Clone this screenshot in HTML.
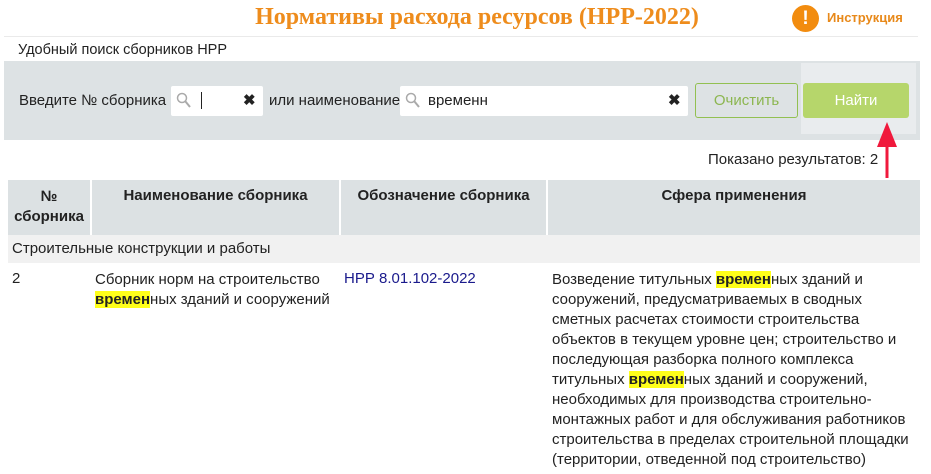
<!DOCTYPE html>
<html><head><meta charset="utf-8"><style>
*{margin:0;padding:0;box-sizing:border-box}
body{width:931px;height:474px;overflow:hidden;background:#fff;font-family:"Liberation Sans",Arial,sans-serif;font-size:15px;color:#222;position:relative}
.a{position:absolute;white-space:nowrap}
.hl{background:#ffff1a;font-weight:bold}
</style></head><body>
<div class="a" style="left:0;width:954px;top:4px;text-align:center;font-family:'Liberation Serif',serif;font-weight:bold;font-size:24px;color:#ee8c1c">Нормативы расхода ресурсов (НРР-2022)</div>
<div class="a" style="left:792px;top:5px;width:27px;height:27px;border-radius:50%;background:#f28c0f;color:#fff;font-weight:bold;font-size:19px;text-align:center;line-height:27px">!</div>
<div class="a" style="left:827px;top:10px;font-weight:bold;font-size:13px;color:#e8891a">Инструкция</div>
<div class="a" style="left:4px;top:36px;width:914px;height:1px;background:#eaeaea"></div>
<div class="a" style="left:18px;top:42px;font-size:14.5px">Удобный поиск сборников НРР</div>
<div class="a" style="left:4px;top:61px;width:916px;height:79px;background:#dde2e4"></div>
<div class="a" style="left:801px;top:63px;width:115px;height:71px;background:#e9ecee"></div>
<div class="a" style="left:19px;top:92px">Введите № сборника</div>
<div class="a" style="left:171px;top:86px;width:92px;height:30px;background:#fff;border-radius:2px"></div>
<svg class="a" style="left:176px;top:92px" width="16" height="17" viewBox="0 0 16 17"><circle cx="6" cy="6" r="4.5" fill="none" stroke="#aaa" stroke-width="1.5"/><path d="M9.5 9.5 L14 15" stroke="#aaa" stroke-width="2"/></svg>
<div class="a" style="left:201px;top:92px;width:1px;height:17px;background:#222"></div>
<div class="a" style="left:243px;top:91px;font-weight:bold;font-size:15px">✖</div>
<div class="a" style="left:269px;top:92px">или наименование</div>
<div class="a" style="left:400px;top:86px;width:288px;height:30px;background:#fff;border-radius:2px"></div>
<svg class="a" style="left:405px;top:92px" width="16" height="17" viewBox="0 0 16 17"><circle cx="6" cy="6" r="4.5" fill="none" stroke="#aaa" stroke-width="1.5"/><path d="M9.5 9.5 L14 15" stroke="#aaa" stroke-width="2"/></svg>
<div class="a" style="left:428px;top:92px">временн</div>
<div class="a" style="left:668px;top:91px;font-weight:bold;font-size:15px">✖</div>
<div class="a" style="left:695px;top:83px;width:103px;height:35px;border:1px solid #92c051;border-radius:3px;color:#8cb650;text-align:center;line-height:33px">Очистить</div>
<div class="a" style="left:803px;top:83px;width:106px;height:35px;background:#b6d66b;border-radius:3px;color:#fff;text-align:center;line-height:35px">Найти</div>
<svg class="a" style="left:876px;top:120px" width="22" height="60" viewBox="0 0 22 60"><path d="M11 2 L21 27 L1 27 Z" fill="#f0193c"/><rect x="9.5" y="26" width="3" height="32" fill="#f0193c"/></svg>
<div class="a" style="left:708px;top:151px">Показано результатов: 2</div>
<div class="a" style="left:8px;top:180px;width:912px;height:55px;background:#dce1e3"></div>
<div class="a" style="left:90px;top:180px;width:2px;height:55px;background:#fff"></div>
<div class="a" style="left:339px;top:180px;width:2px;height:55px;background:#fff"></div>
<div class="a" style="left:546px;top:180px;width:2px;height:55px;background:#fff"></div>
<div class="a" style="left:8px;top:187px;width:82px;text-align:center;font-weight:bold;line-height:20px">№<br>сборника</div>
<div class="a" style="left:92px;top:187px;width:247px;text-align:center;font-weight:bold">Наименование сборника</div>
<div class="a" style="left:341px;top:187px;width:205px;text-align:center;font-weight:bold">Обозначение сборника</div>
<div class="a" style="left:548px;top:187px;width:372px;text-align:center;font-weight:bold">Сфера применения</div>
<div class="a" style="left:8px;top:235px;width:912px;height:28px;background:#f1f1f1"></div>
<div class="a" style="left:12px;top:240px">Строительные конструкции и работы</div>
<div class="a" style="left:12px;top:270px">2</div>
<div class="a" style="left:95px;top:270px;line-height:20px">Сборник норм на строительство<br><span class="hl">времен</span>ных зданий и сооружений</div>
<div class="a" style="left:344px;top:270px;color:#1a1a8c">НРР 8.01.102-2022</div>
<div class="a" style="left:552px;top:270px;line-height:20px">Возведение титульных <span class="hl">времен</span>ных зданий и<br>сооружений, предусматриваемых в сводных<br>сметных расчетах стоимости строительства<br>объектов в текущем уровне цен; строительство и<br>последующая разборка полного комплекса<br>титульных <span class="hl">времен</span>ных зданий и сооружений,<br>необходимых для производства строительно-<br>монтажных работ и для обслуживания работников<br>строительства в пределах строительной площадки<br>(территории, отведенной под строительство)</div>
</body></html>
